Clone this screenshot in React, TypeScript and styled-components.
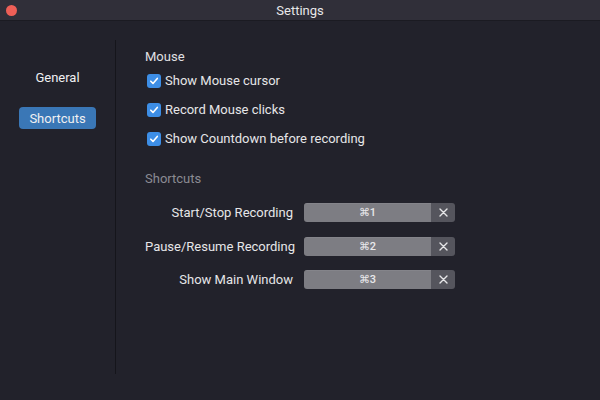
import React, { useState } from "react";
import styled, { createGlobalStyle } from "styled-components";

const GlobalStyle = createGlobalStyle`
  html, body {
    margin: 0;
    padding: 0;
    background: #22222b;
  }
  * { box-sizing: border-box; }
`;

const Window = styled.div`
  width: 600px;
  height: 400px;
  display: flex;
  flex-direction: column;
  background-color: #22222b;
  font-family: Roboto, "Liberation Sans", sans-serif;
  color: #e4e4e6;
  overflow: hidden;
`;

const TitleBar = styled.div`
  position: relative;
  height: 21px;
  flex: none;
  display: flex;
  align-items: center;
  justify-content: center;
  background-color: #302f39;
  border-bottom: 1px solid #1b1b22;
  font-size: 13px;
  color: #e8e8ea;

  .close-dot {
    position: absolute;
    left: 6px;
    top: 5px;
    width: 11px;
    height: 11px;
    border-radius: 50%;
    background-color: #ee5f57;
  }
`;

const Body = styled.div`
  flex: 1;
  display: flex;
`;

const Sidebar = styled.nav`
  width: 116px;
  flex: none;
  margin: 19px 0 26px;
  border-right: 1px solid #15151b;
  display: flex;
  flex-direction: column;
  align-items: center;
  padding: 26px 0 0 0;
  gap: 19px;
`;

const NavItem = styled.button<{ $active?: boolean }>`
  width: 77px;
  height: 22px;
  border: 0;
  border-radius: 4px;
  padding: 0;
  font-family: inherit;
  font-size: 13px;
  color: #f0f0f2;
  background-color: ${(p) => (p.$active ? "#3a77b6" : "transparent")};
  cursor: pointer;
  outline: none;
`;

const Content = styled.div`
  flex: 1;
  padding: 27px 0 0 29px;
`;

const SectionTitle = styled.div<{ $muted?: boolean }>`
  font-size: 13px;
  line-height: 18px;
  color: ${(p) => (p.$muted ? "#8b8b93" : "#e0e0e3")};
  margin-bottom: ${(p) => (p.$muted ? "15px" : "0")};
`;

const CheckRow = styled.label`
  display: flex;
  align-items: center;
  height: 29px;
  padding-left: 2px;
  font-size: 13px;
  color: #e6e6e8;
  cursor: pointer;

  .box {
    width: 14px;
    height: 14px;
    border-radius: 3px;
    background-color: #3d8ee6;
    display: flex;
    align-items: center;
    justify-content: center;
    margin-right: 4px;
  }
`;

const CheckList = styled.div`
  margin-bottom: 17px;
`;

const ShortcutGrid = styled.div`
  display: grid;
  grid-template-columns: 159px 127px 24px;
  grid-auto-rows: 19px;
  row-gap: 14.5px;
  align-items: center;
`;

const ShortcutLabel = styled.div`
  text-align: right;
  white-space: nowrap;
  padding-right: 11px;
  font-size: 13px;
  color: #e6e6e8;
`;

const KeyField = styled.div`
  height: 19px;
  border-radius: 3px 0 0 3px;
  background-color: #7d7d83;
  display: flex;
  align-items: center;
  justify-content: center;
  font-size: 11px;
  font-weight: 500;
  color: #e8e8ea;
  box-shadow: inset 0 0.5px 0 rgba(255, 255, 255, 0.12);
`;

const ClearButton = styled.button`
  height: 19px;
  border: 0;
  padding: 0;
  border-radius: 0 3px 3px 0;
  background-color: #55555d;
  display: flex;
  align-items: center;
  justify-content: center;
  cursor: pointer;
  outline: none;
`;

const Check = () => (
  <svg width="10" height="10" viewBox="0 0 10 10">
    <path d="M1.8 5.2 L4 7.4 L8.3 2.4" fill="none" stroke="#fff" strokeWidth="1.6" strokeLinecap="round" strokeLinejoin="round" />
  </svg>
);

const Cross = () => (
  <svg width="9" height="9" viewBox="0 0 9 9">
    <path d="M1 1 L8 8 M8 1 L1 8" stroke="#e6e6e8" strokeWidth="1.4" strokeLinecap="round" />
  </svg>
);

const mouseOptions = ["Show Mouse cursor", "Record Mouse clicks", "Show Countdown before recording"];

const shortcuts = [
  { label: "Start/Stop Recording", keys: "⌘1" },
  { label: "Pause/Resume Recording", keys: "⌘2" },
  { label: "Show Main Window", keys: "⌘3" },
];

const App: React.FC = () => {
  const [tab, setTab] = useState("Shortcuts");
  return (
    <Window>
      <GlobalStyle />
      <TitleBar>
        <span className="close-dot" />
        Settings
      </TitleBar>
      <Body>
        <Sidebar>
          {["General", "Shortcuts"].map((t) => (
            <NavItem key={t} type="button" $active={tab === t} onClick={() => setTab(t)}>
              {t}
            </NavItem>
          ))}
        </Sidebar>
        <Content>
          <SectionTitle>Mouse</SectionTitle>
          <CheckList>
            {mouseOptions.map((o) => (
              <CheckRow key={o}>
                <span className="box">
                  <Check />
                </span>
                {o}
              </CheckRow>
            ))}
          </CheckList>
          <SectionTitle $muted>Shortcuts</SectionTitle>
          <ShortcutGrid>
            {shortcuts.map((s) => (
              <React.Fragment key={s.label}>
                <ShortcutLabel>{s.label}</ShortcutLabel>
                <KeyField>{s.keys}</KeyField>
                <ClearButton type="button">
                  <Cross />
                </ClearButton>
              </React.Fragment>
            ))}
          </ShortcutGrid>
        </Content>
      </Body>
    </Window>
  );
};

export default App;
